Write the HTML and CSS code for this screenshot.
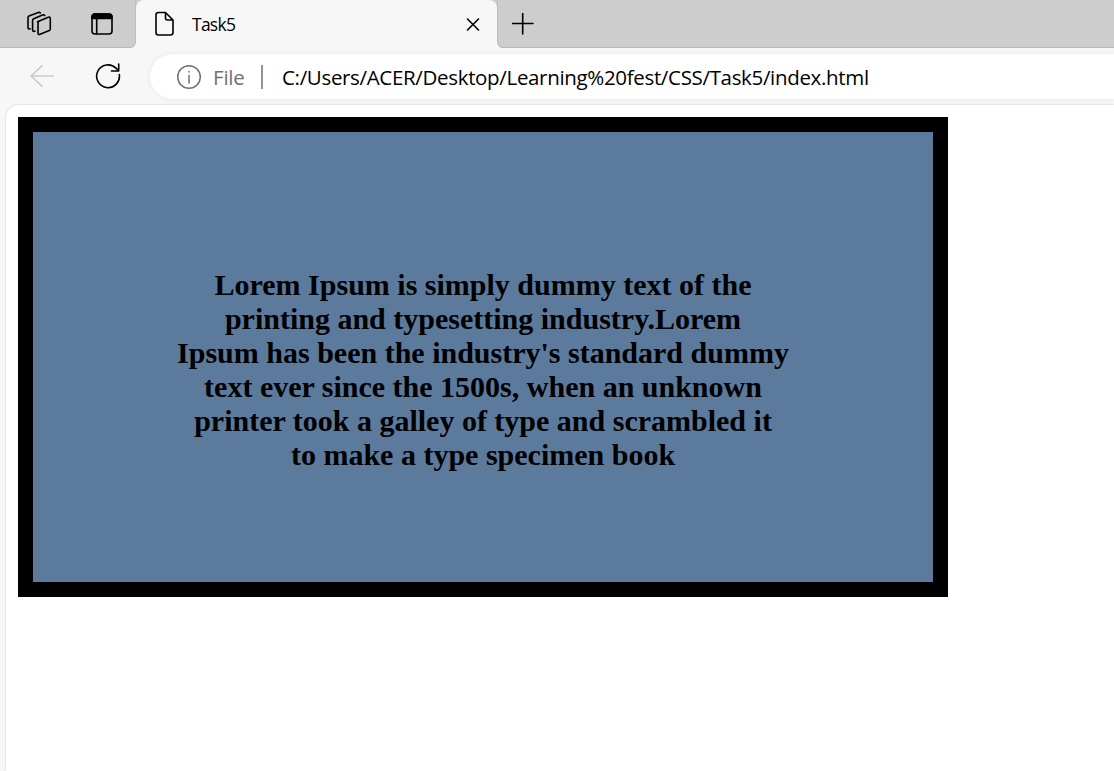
FILE: index.html
```html
<!DOCTYPE html>
<html lang="en">
<head>
<meta charset="utf-8">
<title>Task5</title>
<link rel="stylesheet" href="styles.css">
</head>
<body>
<div class="browser">
  <header class="tabs">
    <div class="tools">
      <svg class="icon" width="26" height="26" viewBox="0 0 26 26"><path d="M11.5 10.7 L22.3 6.3 Q24.3 5.5 24.3 7.5 V18 Q24.3 19 23.3 19.5 L14 23.2 Q12 24 12 22 V11.8 Q12 11 13 10.3 M9 20 Q6.6 21.1 6.6 19 V9.5 Q6.6 8.3 7.7 7.8 L16.5 3.9 Q18 3.3 18.7 4.5 M4.2 17.8 Q2 18.5 2 16.5 V6.7 Q2 5.5 3 5 L12.3 1.4 Q13.6 1 14.3 2"/></svg>
      <svg class="icon" width="22" height="22" viewBox="0 0 22 22"><rect x="1" y="1" width="20" height="20" rx="3"/><path class="solid" d="M1 5.5V4Q1 1 4 1H18Q21 1 21 4V5.5Z"/><path d="M5.7 6V21"/></svg>
    </div>
    <div class="tab">
      <svg class="icon page-icon" width="20" height="26" viewBox="0 0 20 26"><path d="M3.5 1.5H10.5L18 9V21.5Q18 24 15.5 24H3.5Q1 24 1 21.5V4Q1 1.5 3.5 1.5ZM10.5 1.5V7Q10.5 9 12.5 9H18"/></svg>
      <span class="tab-title">Task5</span>
      <svg class="icon" width="14" height="14" viewBox="0 0 14 14"><path d="M1.5 2 12.5 13M12.5 2 1.5 13"/></svg>
    </div>
    <div class="rest"><svg class="icon" width="22" height="22" viewBox="0 0 22 22"><path d="M.5 10.5H21M10.7.3V21"/></svg></div>
  </header>
  <nav class="toolbar">
    <svg class="icon back" width="24" height="22" viewBox="0 0 24 22"><path d="M24 11H1M12 .8 1 11 12 21.2"/></svg>
    <svg class="icon reload" width="26" height="26" viewBox="0 0 26 26"><path d="M24.3 11.5A11.4 11.4 0 1 1 21 5.1L23.5 7.5M23.7 1V8H16.5"/></svg>
    <div class="address">
      <svg class="icon info" width="26" height="26" viewBox="0 0 26 26"><circle cx="13" cy="13" r="11.3"/><path d="M13 11.5V19M13 7.5V8"/></svg>
      <span class="scheme">File</span>
      <span class="divider"></span>
      <span class="url">C:/Users/ACER/Desktop/Learning%20fest/CSS/Task5/index.html</span>
    </div>
  </nav>
  <main class="viewport">
    <div class="box">
      <p class="copy">Lorem Ipsum is simply dummy text of the<br>printing and typesetting industry.Lorem<br>Ipsum has been the industry's standard dummy<br>text ever since the 1500s, when an unknown<br>printer took a galley of type and scrambled it<br>to make a type specimen book</p>
    </div>
  </main>
</div>
</body>
</html>
```
FILE: styles.css
```css
* { box-sizing: border-box; }
body { margin: 0; font-family: "Open Sans", "Noto Sans", sans-serif; background: #f7f7f7; color: #000; }
.browser { height: 771px; overflow: hidden; display: flex; flex-direction: column; }
.icon { fill: none; stroke: #000; stroke-width: 1.6; stroke-linecap: round; stroke-linejoin: round; flex: none; display: block; }
.solid { fill: #000; }
.tabs { display: flex; height: 48px; flex: none; background: linear-gradient(#cdcdcd 50%, #f7f7f7 50%); }
.tools { width: 136px; background: #cdcdcd; border-bottom: 1px solid #b8b8b8; border-right: 1px solid #bcbcbc; border-bottom-right-radius: 6px; display: flex; align-items: center; padding-left: 26px; gap: 39px; }
.tab { width: 361px; display: flex; align-items: center; padding: 0 17px 0 19px; background: #f7f7f7; border-radius: 8px 8px 0 0; }
.tab-title { flex: 1; margin-left: 17px; padding-bottom: 1px; font-size: 17.5px; letter-spacing: -0.75px; line-height: 24px; }
.rest { flex: 1; background: #cdcdcd; border-bottom: 1px solid #b8b8b8; border-left: 1px solid #bcbcbc; border-bottom-left-radius: 6px; padding: 13px 0 0 14px; }
.toolbar { height: 57px; flex: none; display: flex; align-items: center; padding: 0 0 1px 30px; }
.back { stroke: #cbcbcb; }
.reload { margin-left: 41px; }
.address { flex: 1; height: 45px; margin: 1px 0 0 29px; background: #fff; border-radius: 23px 0 0 23px; box-shadow: 0 0 5px rgba(0, 0, 0, 0.08); display: flex; align-items: center; padding-left: 26px; font-size: 20.5px; white-space: nowrap; }
.info { stroke: #707070; stroke-width: 1.5; }
.scheme { color: #707070; width: 32px; margin-left: 11px; letter-spacing: -0.2px; }
.divider { width: 2px; height: 24px; background: #929292; margin: 0 19px 0 16px; }
.url { letter-spacing: -0.33px; }
.viewport { flex: 1; margin-left: 6px; background: #fff; border-top-left-radius: 12px; box-shadow: 0 0 2px rgba(0, 0, 0, 0.25); padding: 12px; }
.box { width: 930px; height: 480px; border: 15px solid #000; background: #5c7a9c; padding-top: 136px; }
.copy { margin: 0; font-family: "Liberation Serif", serif; font-weight: bold; font-size: 30px; line-height: 34px; text-align: center; white-space: nowrap; }
```
